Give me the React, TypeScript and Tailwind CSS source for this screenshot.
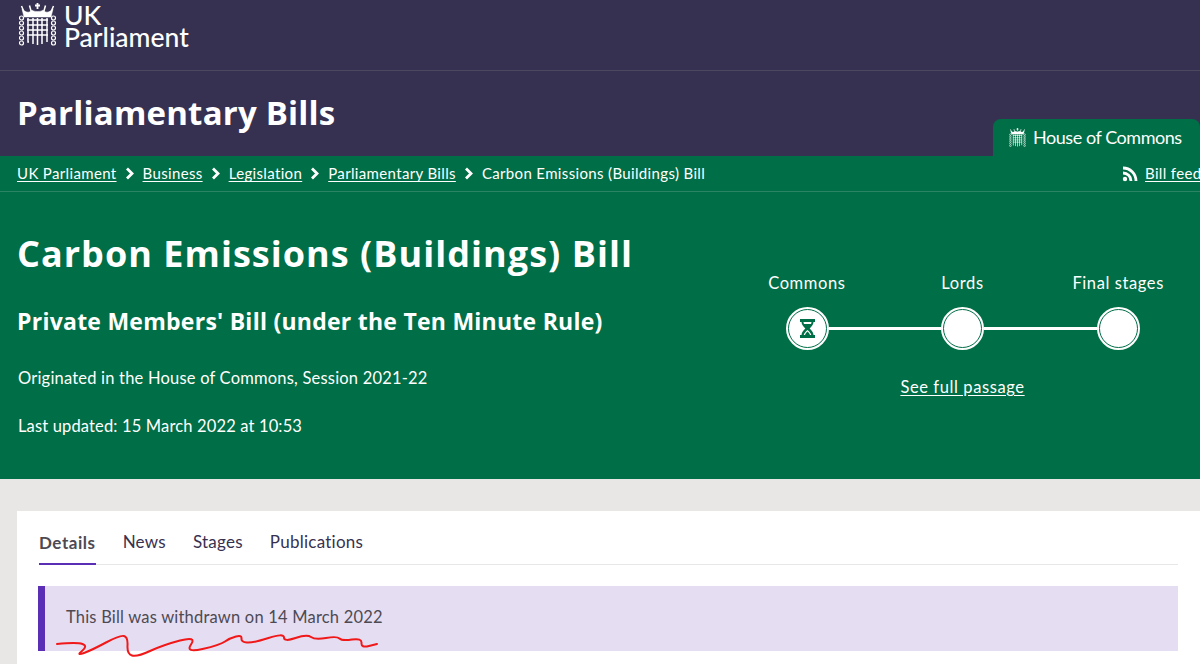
import React from 'react';

const Portcullis: React.FC<{ className?: string }> = ({ className }) => (
  <svg viewBox="0 0 37 43" className={className} fill="none" stroke="currentColor">
    {/* crown */}
    <path d="M18.500 0v6M16 2.500h5" strokeWidth="1.800" />
    <path d="M2.500 3l3 7M34.500 3l-3 7M10.500 2.500l2 7M26.500 2.500l-2 7" strokeWidth="1.500" />
    <path d="M3 6c4 4 8 4 10 1 1.500 2 9.500 2 11 0 2 3 6 3 10-1l-2 8H5z" fill="currentColor" strokeWidth="0.500" />
    {/* grille */}
    <path d="M8 17h21M8 22h21M8 27h21M8 32h21" strokeWidth="1.300" />
    <path d="M9 15v24l1 0M14 15v26M18.500 15v27M23 15v26M28 15v24" strokeWidth="1.500" />
    {/* chains */}
    {[15, 20, 25, 30, 35, 40].map((y) => (
      <React.Fragment key={y}>
        <circle cx="2.500" cy={y} r="2" strokeWidth="1.200" />
        <circle cx="34.500" cy={y} r="2" strokeWidth="1.200" />
      </React.Fragment>
    ))}
  </svg>
);

const Chevron = () => (
  <svg viewBox="0 0 10 13" className="w-[10px] h-[13px] text-white" fill="none" stroke="currentColor" strokeWidth="2.800">
    <path d="M2 1.500l5 5-5 5" />
  </svg>
);

const crumbs = ['UK Parliament', 'Business', 'Legislation', 'Parliamentary Bills'];
const tabs = ['News', 'Stages', 'Publications'];

const scribble: [number, number][] = [
  [57, 644], [77, 642], [88, 646], [76, 656], [92, 650], [120, 635], [128, 637], [127, 654], [137, 657],
  [163, 645], [197, 636], [185, 653], [220, 645], [230, 638], [242, 635], [241, 642], [253, 643],
  [284, 633], [284, 642], [307, 634], [315, 640], [337, 636], [342, 641], [362, 638], [361, 648], [377, 644],
];

// midpoints joined by quadratic curves, so the line reads as pen strokes
const scribblePath = scribble.reduce((d, [x, y], i) => {
  if (i === 0) return `M${x} ${y}`;
  if (i === scribble.length - 1) return `${d} L${x} ${y}`;
  const [nx, ny] = scribble[i + 1];
  return `${d} Q${x} ${y} ${(x + nx) / 2} ${(y + ny) / 2}`;
}, '');

const StageDot: React.FC<{ children?: React.ReactNode }> = ({ children }) => (
  <div className="w-[43px] h-[43px] rounded-full bg-white border-2 border-white flex items-center justify-center shrink-0">
    <div className="w-full h-full rounded-full border border-[#006e46] flex items-center justify-center">
      {children}
    </div>
  </div>
);

export default function App() {
  return (
    <div className="w-[1200px] h-[664px] overflow-hidden bg-[#e8e7e5] font-['Lato',sans-serif] relative">
      <div className="bg-[#373151] text-white">
        <div className="h-[71px] border-b border-[#4d4862] flex items-start pl-[19px] pt-[3px] gap-[8px]">
          <Portcullis className="w-[37px] h-[43px]" />
          <div className="text-[26.500px] leading-[22px] font-medium mt-[1px]">
            <div>UK</div>
            <div>Parliament</div>
          </div>
        </div>
        <div className="h-[85px] flex justify-between items-end pl-[17px]">
          <h1 className="self-center font-['Open_Sans',sans-serif] text-[33px] leading-10 font-bold tracking-[0.2px] -mt-[2px]">Parliamentary Bills</h1>
          <div className="w-[207px] h-[37px] bg-[#006e46] rounded-t-[8px] flex items-center pl-[16px] gap-[7px]">
            <Portcullis className="w-[17px] h-[19px]" />
            <span className="text-[18px] tracking-[-0.45px]">House of Commons</span>
          </div>
        </div>
      </div>

      <div className="bg-[#006e46] text-white h-[323px]">
        <div className="h-[36px] border-b border-[#2b8565] flex items-center justify-between pl-[17px] text-[15px] tracking-[0.35px]">
          <div className="flex items-center">
            {crumbs.map((c) => (
              <React.Fragment key={c}>
                <a className="underline underline-offset-2">{c}</a>
                <span className="mx-[8px]"><Chevron /></span>
              </React.Fragment>
            ))}
            <span>Carbon Emissions (Buildings) Bill</span>
          </div>
          <div className="flex items-center gap-[7px] w-[78px] shrink-0 overflow-hidden whitespace-nowrap">
            <svg viewBox="0 0 16 16" className="w-[16px] h-[16px] shrink-0" fill="none" stroke="currentColor" strokeWidth="2.800">
              <circle cx="3" cy="13" r="2.200" fill="currentColor" stroke="none" />
              <path d="M1 7a8 8 0 0 1 8 8M1 2a13 13 0 0 1 13 13" />
            </svg>
            <a className="underline underline-offset-2">Bill feed</a>
          </div>
        </div>
        <div className="flex justify-between pl-[17px] pr-[4px]">
          <div>
            <h2 className="mt-[38px] font-['Open_Sans',sans-serif] text-[36px] leading-[48px] font-bold tracking-[1.03px]">Carbon Emissions (Buildings) Bill</h2>
            <div className="mt-[27px] font-['Open_Sans',sans-serif] text-[23px] leading-[32px] font-bold tracking-[0.25px]">Private Members' Bill (under the Ten Minute Rule)</div>
            <div className="mt-[29px] ml-[1px] text-[16.500px] leading-6 tracking-[0.2px]">Originated in the House of Commons, Session 2021-22</div>
            <div className="mt-[24px] ml-[1px] text-[16.500px] leading-6 tracking-[0.15px]">Last updated: 15 March 2022 at 10:53</div>
          </div>
          <div className="w-[467px] mt-[79px] flex flex-col items-center text-[16.500px] tracking-[0.6px]">
            <div className="w-full grid grid-cols-3 leading-6 text-center">
              <span>Commons</span>
              <span>Lords</span>
              <span>Final stages</span>
            </div>
            <div className="w-[354px] mt-[12px] flex items-center">
              <StageDot>
                <svg viewBox="0 0 15 19" className="w-[15px] h-[19px] text-[#006e46]" fill="currentColor">
                  <path fillRule="evenodd" d="M0 0h15v3h-1.500c0 3-2.500 4.800-3.800 6.500 1.300 1.700 3.800 3.500 3.800 6.500H15v3H0v-3h1.500c0-3 2.500-4.800 3.800-6.500C4 7.800 1.500 6 1.500 3H0zM3.500 3c0 .8.200 1.400.5 2h7c.3-.6.500-1.200.5-2zM7.500 11c-1.500 1.400-3.300 2.800-3.800 5h7.600c-.5-2.200-2.300-3.600-3.800-5z" />
                  <path d="M7.500 12.500c1 1 2 2 2.500 3.500H5c.5-1.500 1.500-2.500 2.500-3.500z" />
                </svg>
              </StageDot>
              <div className="flex-1 h-[3px] bg-white" />
              <StageDot />
              <div className="flex-1 h-[3px] bg-white" />
              <StageDot />
            </div>
            <a className="mt-[25px] leading-6 underline underline-offset-2">See full passage</a>
          </div>
        </div>
      </div>

      <div className="mt-[32px] ml-[17px] bg-white h-[200px] pt-[14px] pl-[22px] pr-[22px]">
        <div className="border-b border-[#e8e7e5] h-[40px] flex gap-[27px] text-[17px] tracking-[0.25px] text-[#373151]">
          <div className="h-[40px] border-b-2 border-[#5b2fb5] font-bold text-[#4d4a52] leading-[36px] tracking-[0.55px]">Details</div>
          {tabs.map((t) => (
            <div key={t} className="leading-[34px]">{t}</div>
          ))}
        </div>
        <div className="mt-[21px] -ml-[1px] h-[65px] bg-[#e5ddf2] border-l-[7px] border-[#5b2fb5] flex items-center pl-[21px] pb-[3px] text-[16.500px] tracking-[0.2px] text-[#4d4a52]">
          This Bill was withdrawn on 14 March 2022
        </div>
      </div>

      {/* red pen scribble drawn over the screenshot */}
      <svg viewBox="0 0 1200 664" className="absolute left-0 top-0 w-[1200px] h-[664px] pointer-events-none" fill="none" stroke="#f01818" strokeWidth="2" strokeLinejoin="round" strokeLinecap="round">
        <path d={scribblePath} />
      </svg>
    </div>
  );
}
